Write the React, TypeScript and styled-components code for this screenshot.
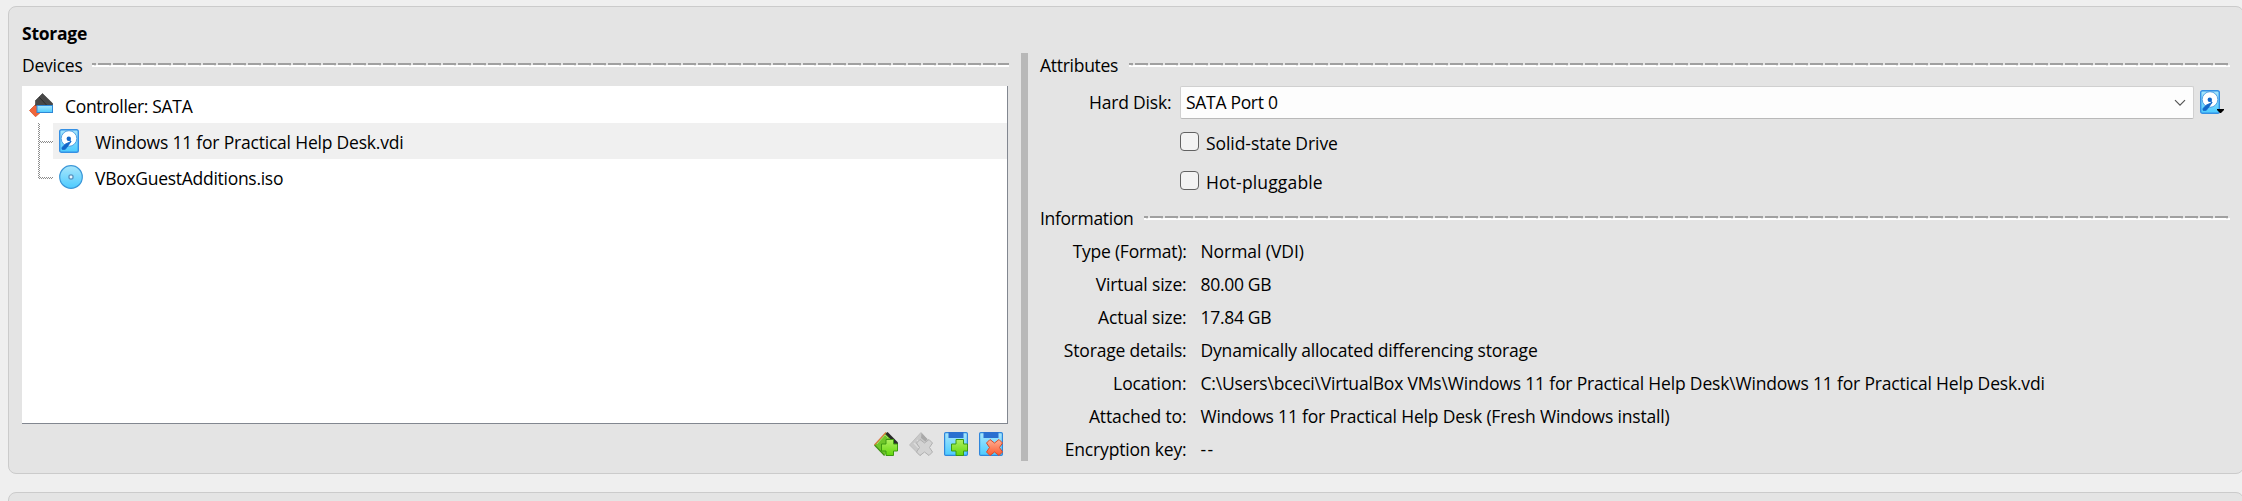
import React from 'react';
import styled, { createGlobalStyle } from 'styled-components';

const GlobalStyle = createGlobalStyle`
  *, *::before, *::after { box-sizing: border-box; }
  html, body { margin: 0; padding: 0; background: #efefef; overflow: hidden; }
  body {
    font-family: "Open Sans", "Noto Sans", sans-serif;
    font-size: 17.5px;
    color: #000;
  }
`;

const Page = styled.div`
  height: 501px;
  padding: 6px 0 0 8px;
  display: flex;
  flex-direction: column;
  gap: 18px;
  overflow: hidden;
`;

const Panel = styled.section`
  width: 2236px;
  height: 468px;
  flex: none;
  padding: 0 13px;
  background: #e4e4e4;
  border: 1px solid #cbcbcb;
  border-radius: 8px;
`;

const Label = styled.span<{ $track?: number }>`
  white-space: pre;
  letter-spacing: ${({ $track = -0.17 }) => $track}px;
`;

const PanelTitle = styled.h1`
  margin: 0;
  height: 46px;
  padding-top: 9px;
  font-size: 17.5px;
  font-weight: 700;
  line-height: 34px;
`;

const Columns = styled.div`
  display: flex;
  height: 408px;
`;

const DevicesColumn = styled.div`
  width: 987px;
  display: flex;
  flex-direction: column;
`;

const Splitter = styled.div`
  width: 7px;
  margin: 0 12px;
  background: #b8b8b8;
`;

const DetailsColumn = styled.div`
  width: 1190px;
`;

const GroupHeader = styled.header<{ $labelWidth: number }>`
  height: 33px;
  display: grid;
  grid-template-columns: ${({ $labelWidth }) => $labelWidth}px 1fr;
  line-height: 25px;
`;

const Rule = styled.div`
  height: 4px;
  margin-top: 10px;
  background:
    linear-gradient(90deg, #a0a0a0 0 4px, #e4e4e4 4px 6px, #a0a0a0 6px 15px) 0 0 / 15px 2px repeat-x,
    linear-gradient(90deg, #fff 0 2px, #e4e4e4 2px 4px, #fff 4px 15px) 0 2px / 15px 1px repeat-x,
    #fff;
`;

const Tree = styled.div`
  width: 986px;
  height: 338px;
  padding-top: 1px;
  background: #fff;
  border-right: 1px solid #828790;
  border-bottom: 1px solid #828790;
`;

const ControllerRow = styled.div`
  height: 36px;
  padding: 6px 0 0 7px;
  display: flex;
  gap: 12px;
  line-height: 27px;
`;

const DeviceRow = styled.div`
  height: 36px;
  display: grid;
  grid-template-columns: 31px 1fr;
`;

const DeviceCell = styled.div<{ $selected?: boolean }>`
  height: 36px;
  padding: 6px 0 0 6px;
  display: flex;
  gap: 12px;
  line-height: 27px;
  background: ${({ $selected }) => ($selected ? '#f0f0f0' : 'transparent')};
`;

const Toolbar = styled.div`
  display: flex;
  justify-content: flex-end;
  gap: 11px;
  padding: 8px 6px 0 0;
`;

const Icon = styled.svg`
  display: block;
  flex: none;
`;

const FieldRow = styled.div`
  height: 33px;
  display: flex;
  align-items: stretch;
`;

const FieldLabel = styled.div`
  width: 140px;
  padding-right: 8.5px;
  text-align: right;
  line-height: 32px;
`;

const Combo = styled.div`
  width: 1014px;
  padding: 0 7px 0 5px;
  display: flex;
  justify-content: space-between;
  line-height: 30px;
  background: #fdfdfd;
  border: 1px solid #d0d0d0;
  border-bottom-color: #b9b9b9;
  border-radius: 2px;
`;

const Chevron = styled.svg`
  margin-top: 12px;
`;

const ComboButton = styled.div`
  padding: 4px 0 0 6px;
`;

const Checks = styled.div`
  height: 87px;
  padding: 13px 0 0 140px;
  display: flex;
  flex-direction: column;
  gap: 20px;
`;

const Check = styled.label`
  height: 19px;
  display: flex;
  gap: 7px;
  line-height: 23px;
`;

const Box = styled.span`
  width: 19px;
  height: 19px;
  background: #f3f3f3;
  border: 1px solid #626262;
  border-radius: 4px;
`;

const InfoTable = styled.dl`
  margin: 0;
  padding-top: 1px;
  display: grid;
  grid-template-columns: 146.5px 1fr;
  column-gap: 14px;
  grid-auto-rows: 33px;
  line-height: 23px;
`;

const Term = styled.dt`
  text-align: right;
`;

const Value = styled.dd`
  margin: 0;
`;

const Sky = ({ id }: { id: string }) => (
  <linearGradient id={id} x1="0" y1="0" x2="0" y2="1">
    <stop offset="0" stopColor="#a9e6fb" />
    <stop offset="1" stopColor="#4ccbff" />
  </linearGradient>
);

const Green = ({ id }: { id: string }) => (
  <linearGradient id={id} x1="0" y1="0" x2="0" y2="1">
    <stop offset="0" stopColor="#b0f060" />
    <stop offset="1" stopColor="#62d60c" />
  </linearGradient>
);

const PLUS = 'M12 7.5h7.500v4.500h4v7h-4v4.500h-7.500v-4.500h-4.500v-7h4.500z';
const CROSS = 'M11 7.500l4.500 3.500 4.500-3.500 3.500 3.500-3 4.500 3 4.500-3.500 3.500-4.500-3.500-4.500 3.500-3.500-3.500 3-4.500-3-4.500z';

function ControllerIcon() {
  return (
    <Icon width="24" height="24" viewBox="0 0 24 24">
      <defs><Sky id="ctrlSky" /></defs>
      <path d="M.5 17.500L6.500 11.500L13 18L6.500 23.700z" fill="#f0653a" stroke="#d4552f" strokeWidth=".8" />
      <path d="M13.500 .5L23.700 10.500V12.500H6.500V7.500z" fill="#474747" stroke="#383838" strokeWidth=".6" />
      <path d="M10 4L17.500 12" stroke="#2c2c2c" />
      <rect x="8" y="12.500" width="15.500" height="7" fill="url(#ctrlSky)" stroke="#2f87d6" />
    </Icon>
  );
}

function HardDiskIcon({ id, menu }: { id: string; menu?: boolean }) {
  return (
    <Icon width="24" height="24" viewBox="0 0 24 24">
      <defs><Sky id={id} /></defs>
      <rect x=".7" y=".7" width="18.600" height="22.600" rx="1.800" fill={`url(#${id})`} stroke="#3590e4" strokeWidth="1.400" />
      <circle cx="10" cy="9.500" r="7.800" fill="#fff" stroke="#4a9ae0" strokeWidth=".9" />
      <path d="M12 12.500L6.500 15L2.800 18.700L3.300 20.500L6.300 20.300L9.500 16.200z" fill="#1266c8" stroke="#1266c8" strokeWidth=".8" strokeLinejoin="round" />
      <circle cx="9.800" cy="9.800" r="2.200" fill="#1266c8" />
      <path d="M10 10l2 3" stroke="#1266c8" strokeWidth="1.200" />
      {menu && <path d="M17 19h7v1l-3 3h-1l-3-3z" fill="#000" />}
    </Icon>
  );
}

function DiscIcon() {
  return (
    <Icon width="24" height="24" viewBox="0 0 24 24">
      <defs><Sky id="discSky" /></defs>
      <circle cx="12" cy="12" r="11.300" fill="url(#discSky)" stroke="#3b97d8" strokeWidth="1.200" />
      <circle cx="12" cy="12" r="2.100" fill="#eaf7fd" stroke="#5b93bf" strokeWidth="1.300" />
    </Icon>
  );
}

function AddControllerIcon() {
  return (
    <Icon width="24" height="24" viewBox="0 0 24 24">
      <defs><Green id="addCtrlGreen" /></defs>
      <path d="M12 .5L24 12H12z" fill="#333" />
      <path d="M12 .5L.5 13L10.500 23.500L18 14V6z" fill="#6fc62a" />
      <path d="M12 .5L.5 13" stroke="#d9793c" strokeWidth="1.200" />
      <path d="M.5 13L10.500 23.500" stroke="#3f8f14" strokeWidth="1.100" />
      <path d="M11 3L3 12M11 3l3 3" stroke="#a8e070" strokeWidth=".9" fill="none" />
      <path d="M12.500 1L23.500 12" stroke="#2a2a2a" strokeWidth="3" />
      <path d={PLUS} fill="url(#addCtrlGreen)" stroke="#3d9a10" />
    </Icon>
  );
}

function RemoveControllerIcon() {
  return (
    <Icon width="24" height="24" viewBox="0 0 24 24">
      <path d="M12 .5L.5 13L11 23.500L22 12z" fill="#c8c8c8" stroke="#b8b8b8" strokeWidth=".8" />
      <path d="M12.500 1l6 6-2 2.500-4.500-3.500z" fill="#a9a9a9" />
      <path d="M5 11l6 6M8 8l5 5" stroke="#dcdcdc" strokeWidth="1.500" />
      <path d={CROSS} fill="#d3d3d3" stroke="#b0b0b0" strokeLinejoin="round" />
    </Icon>
  );
}

function AttachmentIcon({ id, children }: { id: string; children: React.ReactNode }) {
  return (
    <Icon width="24" height="24" viewBox="0 0 24 24">
      <defs><Sky id={id} /></defs>
      <rect x=".6" y=".6" width="22.800" height="22.800" rx="1.200" fill={`url(#${id})`} stroke="#2f86dc" strokeWidth="1.200" />
      <path d="M4.500 0h15v6h-15z" fill="#2a6fd0" />
      {children}
    </Icon>
  );
}

function Connector({ last }: { last?: boolean }) {
  const id = last ? 'dotsLast' : 'dots';
  return (
    <Icon width="31" height="36" viewBox="0 0 31 36" shapeRendering="crispEdges">
      <defs>
        <pattern id={id} width="2" height="2" patternUnits="userSpaceOnUse">
          <path d="M0 0h1v1h-1zM1 1h1v1h-1z" fill="#8c8c8c" />
        </pattern>
      </defs>
      <rect x="16" y="0" width="2" height={last ? 20 : 36} fill={`url(#${id})`} />
      <rect x="18" y="18" width="13" height="2" fill={`url(#${id})`} />
    </Icon>
  );
}

const info: { term: string; termTrack?: number; value: string; track?: number }[] = [
  { term: 'Type (Format):', termTrack: -0.25, value: 'Normal (VDI)', track: -0.06 },
  { term: 'Virtual size:', value: '80.00 GB', track: -0.3 },
  { term: 'Actual size:', value: '17.84 GB', track: -0.3 },
  { term: 'Storage details:', value: 'Dynamically allocated differencing storage', track: -0.18 },
  {
    term: 'Location:',
    termTrack: -0.1,
    value: 'C:\\Users\\bceci\\VirtualBox VMs\\Windows 11 for Practical Help Desk\\Windows 11 for Practical Help Desk.vdi',
    track: -0.18,
  },
  { term: 'Attached to:', termTrack: -0.1, value: 'Windows 11 for Practical Help Desk (Fresh Windows install)', track: -0.18 },
  { term: 'Encryption key:', value: '--', track: 1.3 },
];

export default function App() {
  return (
    <>
      <GlobalStyle />
      <Page>
        <Panel>
          <PanelTitle><Label $track={-0.25}>Storage</Label></PanelTitle>
          <Columns>
            <DevicesColumn>
              <GroupHeader $labelWidth={70}>
                <Label $track={-0.24}>Devices</Label>
                <Rule />
              </GroupHeader>
              <Tree>
                <ControllerRow>
                  <ControllerIcon />
                  <Label $track={-0.32}>Controller: SATA</Label>
                </ControllerRow>
                <DeviceRow>
                  <Connector />
                  <DeviceCell $selected>
                    <HardDiskIcon id="treeDisk" />
                    <Label $track={-0.2}>Windows 11 for Practical Help Desk.vdi</Label>
                  </DeviceCell>
                </DeviceRow>
                <DeviceRow>
                  <Connector last />
                  <DeviceCell>
                    <DiscIcon />
                    <Label $track={-0.28}>VBoxGuestAdditions.iso</Label>
                  </DeviceCell>
                </DeviceRow>
              </Tree>
              <Toolbar>
                <AddControllerIcon />
                <RemoveControllerIcon />
                <AttachmentIcon id="addDisk">
                  <defs><Green id="addDiskGreen" /></defs>
                  <path d={PLUS} fill="url(#addDiskGreen)" stroke="#3d9a10" />
                </AttachmentIcon>
                <AttachmentIcon id="removeDisk">
                  <defs>
                    <linearGradient id="removeRed" x1="0" y1="0" x2="0" y2="1">
                      <stop offset="0" stopColor="#ffb094" />
                      <stop offset="1" stopColor="#fa5a30" />
                    </linearGradient>
                  </defs>
                  <path d={CROSS} fill="url(#removeRed)" stroke="#d94a2a" strokeLinejoin="round" />
                </AttachmentIcon>
              </Toolbar>
            </DevicesColumn>
            <Splitter />
            <DetailsColumn>
              <GroupHeader $labelWidth={89}>
                <Label $track={-0.28}>Attributes</Label>
                <Rule />
              </GroupHeader>
              <FieldRow>
                <FieldLabel><Label>Hard Disk:</Label></FieldLabel>
                <Combo>
                  <Label $track={-0.3}>SATA Port 0</Label>
                  <Chevron width="12" height="8" viewBox="0 0 12 8">
                    <path d="M1 1.200l5 5 5-5" fill="none" stroke="#555" strokeWidth="1.200" />
                  </Chevron>
                </Combo>
                <ComboButton><HardDiskIcon id="comboDisk" menu /></ComboButton>
              </FieldRow>
              <Checks>
                <Check><Box /><Label $track={-0.07}>Solid-state Drive</Label></Check>
                <Check><Box /><Label $track={0.15}>Hot-pluggable</Label></Check>
              </Checks>
              <GroupHeader $labelWidth={104}>
                <Label $track={-0.32}>Information</Label>
                <Rule />
              </GroupHeader>
              <InfoTable>
                {info.map((row) => (
                  <React.Fragment key={row.term}>
                    <Term><Label $track={row.termTrack}>{row.term}</Label></Term>
                    <Value><Label $track={row.track}>{row.value}</Label></Value>
                  </React.Fragment>
                ))}
              </InfoTable>
            </DetailsColumn>
          </Columns>
        </Panel>
        <Panel />
      </Page>
    </>
  );
}
